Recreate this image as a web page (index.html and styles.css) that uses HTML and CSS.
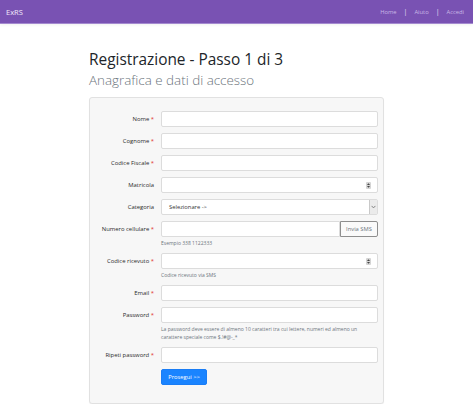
FILE: index.html
```html
<!DOCTYPE html>
<html lang="it">
<head>
<meta charset="utf-8">
<title>ExRS - Registrazione</title>
<link rel="stylesheet" href="styles.css">
</head>
<body>
<header class="navbar">
  <a class="brand" href="#">ExRS</a>
  <nav class="nav">
    <a href="#">Home</a><span class="sep">|</span><a href="#">Aiuto</a><span class="sep">|</span><a href="#">Accedi</a>
  </nav>
</header>
<main class="container">
  <h1 class="title">Registrazione - Passo 1 di 3</h1>
  <h2 class="subtitle">Anagrafica e dati di accesso</h2>
  <form class="card">
    <div class="row"><label class="lbl">Nome <span class="req">*</span></label><div class="field"><input class="input" type="text"></div></div>
    <div class="row"><label class="lbl">Cognome <span class="req">*</span></label><div class="field"><input class="input" type="text"></div></div>
    <div class="row"><label class="lbl">Codice Fiscale <span class="req">*</span></label><div class="field"><input class="input" type="text"></div></div>
    <div class="row"><label class="lbl">Matricola</label><div class="field"><div class="input numbox"><input class="bare" type="text"><span class="spin"><svg width="5" height="7" viewBox="0 0 5 7"><rect x="0" y="0" width="5" height="7" rx="1" fill="#d4d4d4"/><path d="M1 2.9 L2.5 1.2 L4 2.9Z M1 4.1 L2.5 5.8 L4 4.1Z" fill="#444"/></svg></span></div></div></div>
    <div class="row"><label class="lbl">Categoria</label><div class="field"><div class="input selbox"><span class="seltext">Selezionare -&gt;</span><span class="selarrow"><svg width="5" height="4" viewBox="0 0 5 4"><path d="M0.6 0.9 L2.5 2.9 L4.4 0.9" fill="none" stroke="#777" stroke-width="0.9"/></svg></span></div></div></div>
    <div class="row"><label class="lbl">Numero cellulare <span class="req">*</span></label><div class="field"><div class="group"><input class="input grow" type="text"><button class="btn-sms" type="button">Invia SMS</button></div><small class="help">Esempio 338 1122333</small></div></div>
    <div class="row"><label class="lbl">Codice ricevuto <span class="req">*</span></label><div class="field"><div class="input numbox"><input class="bare" type="text"><span class="spin"><svg width="5" height="7" viewBox="0 0 5 7"><rect x="0" y="0" width="5" height="7" rx="1" fill="#d4d4d4"/><path d="M1 2.9 L2.5 1.2 L4 2.9Z M1 4.1 L2.5 5.8 L4 4.1Z" fill="#444"/></svg></span></div><small class="help">Codice ricevuto via SMS</small></div></div>
    <div class="row"><label class="lbl">Email <span class="req">*</span></label><div class="field"><input class="input" type="text"></div></div>
    <div class="row"><label class="lbl">Password <span class="req">*</span></label><div class="field"><input class="input" type="password"><small class="help wrap">La password deve essere di almeno 10 caratteri tra cui lettere, numeri ed almeno un carattere speciale come $.!#@-_*</small></div></div>
    <div class="row"><label class="lbl">Ripeti password <span class="req">*</span></label><div class="field"><input class="input" type="password"></div></div>
    <div class="row"><span></span><div class="field"><button class="btn-primary" type="button">Prosegui &gt;&gt;</button></div></div>
  </form>
</main>
</body>
</html>
```
FILE: styles.css
```css
* { box-sizing: border-box; }
html, body { margin: 0; padding: 0; }
body {
  font-family: "Open Sans", "Noto Sans", "DejaVu Sans", sans-serif;
  background: #fff;
  color: #212529;
}
.navbar {
  display: flex;
  justify-content: space-between;
  align-items: center;
  height: 24px;
  padding: 0 9px 0 6px;
  background: #7952b3;
  border-bottom: 1px solid #a48ad0;
  box-shadow: 0 1px 3px rgba(0,0,0,0.06);
}
.brand {
  color: #f1ebfa;
  font-size: 7.5px;
  text-decoration: none;
}
.nav {
  display: flex;
  align-items: center;
  gap: 7px;
  font-size: 5.8px;
}
.nav a { color: #c9b8e6; text-decoration: none; }
.nav .sep { color: #e8e0f5; font-size: 7px; }
.container {
  width: 295px;
  margin: 0 auto;
  padding-top: 24px;
}
.title {
  margin: 0;
  font-weight: 400;
  font-size: 15.4px;
  line-height: 24px;
  color: #212529;
}
.subtitle {
  margin: 0 0 8px;
  font-weight: 300;
  font-size: 13.4px;
  line-height: 17px;
  color: #6c757d;
}
.card {
  background: #f7f7f7;
  border: 1px solid #e1e1e1;
  border-radius: 3px;
  padding: 13px 6px 18px 6px;
  display: flex;
  flex-direction: column;
  gap: 6px;
  box-shadow: 0 1px 1px rgba(0,0,0,0.05);
}
.row {
  display: grid;
  grid-template-columns: 58px 217px;
  column-gap: 7px;
  align-items: start;
}
.lbl {
  text-align: right;
  font-size: 5.9px;
  line-height: 16px;
  color: #2b2b2b;
  white-space: nowrap;
}
.req { color: #e0302f; }
.field { display: flex; flex-direction: column; }
.input {
  display: block;
  width: 100%;
  height: 16px;
  border: 1px solid #dcdcdc;
  border-radius: 2px;
  background: #fff;
  font: inherit;
  font-size: 5.8px;
  padding: 0 6px;
  margin: 0;
  outline: none;
}
.numbox, .selbox {
  display: flex;
  align-items: center;
}
.bare {
  flex: 1;
  min-width: 0;
  border: 0;
  height: 12px;
  padding: 0;
  outline: none;
  background: transparent;
}
.spin { display: flex; }
.selbox { padding: 0 0 0 7px; }
.seltext { flex: 1; color: #333; font-size: 5.8px; }
.selarrow {
  display: flex;
  align-items: center;
  justify-content: center;
  width: 8px;
  height: 14px;
  background: #ebebeb;
  border-left: 1px solid #c9c9c9;
}
.group { display: flex; }
.grow { flex: 1; border-radius: 2px 0 0 2px; }
.btn-sms {
  width: 38px;
  height: 16px;
  border: 1px solid #8e8e8e;
  border-radius: 0 2px 2px 0;
  background: #fafafa;
  color: #6c757d;
  font: inherit;
  font-size: 5.8px;
  padding: 0;
}
.help {
  display: block;
  margin-top: 2px;
  font-size: 5px;
  line-height: 8px;
  color: #6c757d;
}
.wrap { max-width: 206px; }
.btn-primary {
  width: 46px;
  height: 16px;
  border: 1px solid #1a7df5;
  border-radius: 2px;
  background: #1a84ff;
  color: #fff;
  font: inherit;
  font-size: 5.8px;
  padding: 0;
}
```
